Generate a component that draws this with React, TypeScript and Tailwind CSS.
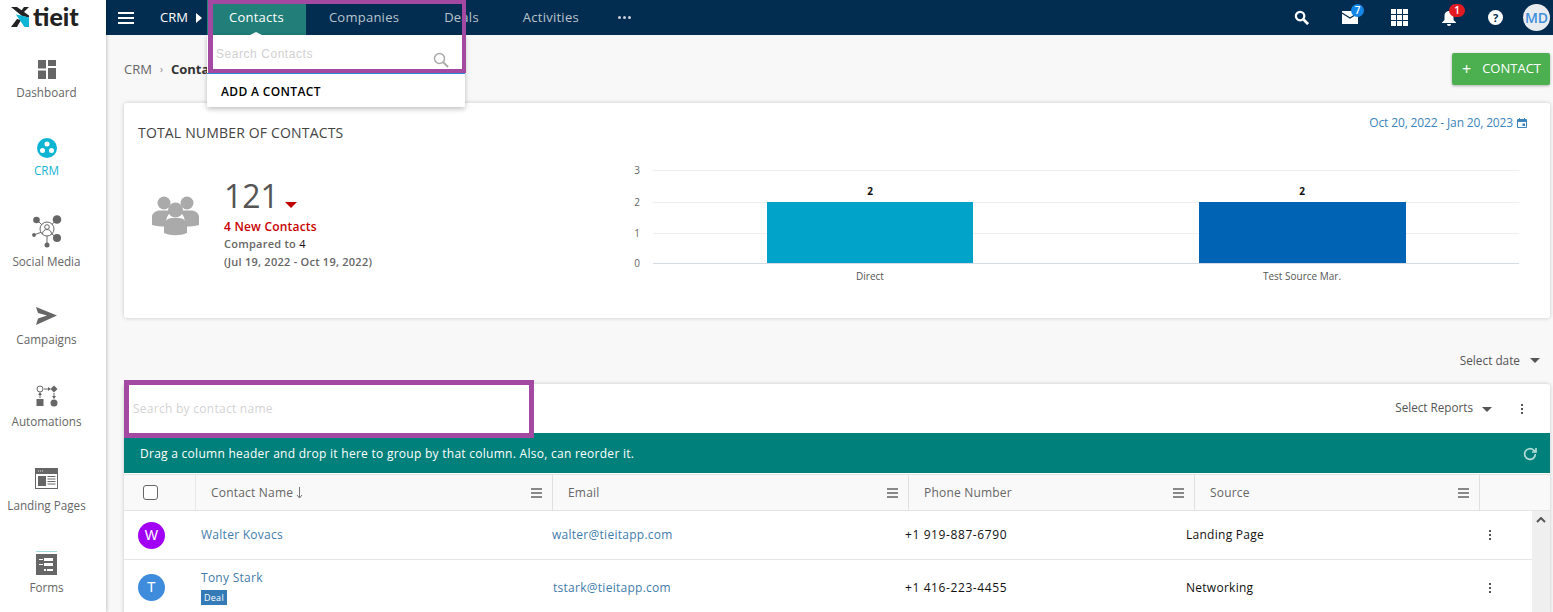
import type { ReactNode } from "react";

const Dashboard = () => (
  <svg width="18" height="19" viewBox="0 0 18 19" fill="#666" className="block">
    <rect x="0" y="0" width="8" height="8.500" />
    <rect x="0" y="10.500" width="8" height="8.500" />
    <rect x="10" y="0" width="8" height="6" />
    <rect x="10" y="8" width="8" height="11" />
  </svg>
);

const Crm = () => (
  <svg width="20" height="20" viewBox="0 0 20 20" className="block">
    <circle cx="10" cy="10" r="10" fill="#0db4d4" />
    <circle cx="10" cy="6" r="2.500" fill="#fff" />
    <circle cx="5.500" cy="12.500" r="2.500" fill="#fff" />
    <circle cx="14.500" cy="12.500" r="2.500" fill="#fff" />
  </svg>
);

const Social = () => (
  <svg width="30" height="33" viewBox="0 0 30 33" fill="#666" stroke="#666" className="block">
    <g strokeWidth="1">
      <line x1="15" y1="15" x2="5" y2="5" />
      <line x1="15" y1="15" x2="25" y2="4" />
      <line x1="15" y1="15" x2="25" y2="23" />
      <line x1="15" y1="15" x2="2" y2="20" />
      <line x1="15" y1="15" x2="15" y2="30" />
    </g>
    <circle cx="4.500" cy="5" r="3.300" stroke="none" />
    <circle cx="25" cy="4.500" r="4.300" stroke="none" />
    <circle cx="25" cy="23" r="4" stroke="none" />
    <circle cx="2" cy="20" r="1.900" stroke="none" />
    <circle cx="15" cy="30" r="2.500" stroke="none" />
    <circle cx="15" cy="14" r="7" fill="#fff" strokeWidth="1" />
    <circle cx="15" cy="12" r="2.300" fill="#fff" strokeWidth="1" />
    <path d="M10.500 19c0-6 9-6 9 0" fill="#fff" strokeWidth="1" />
  </svg>
);

const Campaigns = () => (
  <svg width="21" height="18" viewBox="0 0 21 18" fill="#666" className="block">
    <path d="M0 0l21 8.500L0 18l2-6.500 9-3-9-2.500z" />
  </svg>
);

const Automations = () => (
  <svg width="22" height="22" viewBox="0 0 22 22" fill="#666" stroke="#666" className="block">
    <circle cx="4" cy="4" r="3" fill="#fff" strokeWidth="1" />
    <path d="M8 4h6" strokeWidth="1" />
    <path d="M12 2l3 2-3 2z" stroke="none" />
    <path d="M18 0.500l3.500 3.500-3.500 3.500-3.500-3.500z" stroke="none" />
    <path d="M4 8v5M18 8v5" strokeWidth="1" />
    <path d="M2 10l2-3 2 3zM16 11l2 3 2-3z" stroke="none" />
    <rect x="0.500" y="14" width="7" height="7" stroke="none" />
    <circle cx="18" cy="18" r="3.500" stroke="none" />
  </svg>
);

const Landing = () => (
  <svg width="23" height="21" viewBox="0 0 23 21" className="block">
    <rect x="0.500" y="0.500" width="22" height="20" fill="#fff" stroke="#666" />
    <rect x="0" y="0" width="23" height="6" fill="#666" />
    <rect x="3" y="2.500" width="1" height="1" fill="#ddd" />
    <rect x="5" y="2.500" width="1" height="1" fill="#ddd" />
    <rect x="7" y="2.500" width="1" height="1" fill="#ddd" />
    <rect x="3" y="8" width="8" height="10" fill="#666" />
    <path d="M12.500 8.500h8M12.500 11h8M12.500 13.500h8M12.500 16h8" stroke="#666" strokeWidth="1" />
  </svg>
);

const Forms = () => (
  <svg width="21" height="24" viewBox="0 0 21 24" className="block">
    <rect x="0" y="0" width="21" height="1" fill="#9fdbe2" />
    <rect x="0" y="3" width="21" height="21" fill="#666" />
    <rect x="3" y="8" width="4" height="1" fill="#fff" />
    <rect x="8" y="7" width="9" height="3" fill="#fff" />
    <rect x="3" y="13" width="4" height="1" fill="#fff" />
    <rect x="8" y="12" width="9" height="3" fill="#fff" />
    <rect x="8" y="18" width="2" height="2" fill="#fff" />
    <rect x="11" y="18" width="6" height="2" fill="#fff" />
  </svg>
);

const navItems: { label: string; icon: ReactNode; box: string; gap: string; text: string }[] = [
  { label: "Dashboard", icon: <Dashboard />, box: "h-[66px]", gap: "mb-[4px]", text: "text-[#666]" },
  { label: "CRM", icon: <Crm />, box: "h-[78px]", gap: "mb-[3px]", text: "text-[#19b3d3]" },
  { label: "Social Media", icon: <Social />, box: "h-[91px]", gap: "mb-[4px]", text: "text-[#666]" },
  { label: "Campaigns", icon: <Campaigns />, box: "h-[78px]", gap: "mb-[5px]", text: "text-[#666]" },
  { label: "Automations", icon: <Automations />, box: "h-[82px]", gap: "mb-[5px]", text: "text-[#666]" },
  { label: "Landing Pages", icon: <Landing />, box: "h-[84px]", gap: "mb-[7px]", text: "text-[#666]" },
  { label: "Forms", icon: <Forms />, box: "h-[82px]", gap: "mb-[3px]", text: "text-[#666]" },
];

const Sidebar = () => (
  <aside className="w-[106px] shrink-0 bg-white shadow-[1px_0_3px_rgba(0,0,0,0.2)] z-10">
    <div className="h-[35px] flex items-center pl-[11px] gap-[4px] pb-[2px]">
      <svg width="18" height="20" viewBox="0 0 18 20" className="block">
        <path d="M0 0h6l12 8.500v2L11 9z" fill="#222" />
        <path d="M18 0L11 7 9 5.500 13 0z" fill="#222" />
        <path d="M0 20l6-8 4 1-4 7z" fill="#222" />
        <path d="M5 7.500l5 1 8 2V20h-4.500z" fill="#0db4d4" />
      </svg>
      <span className="font-['Lato',sans-serif] font-black text-[25px] leading-none text-[#222]">tieit</span>
    </div>
    {navItems.map((n) => (
      <div key={n.label} className={`${n.box} flex flex-col items-center justify-end pr-[13px]`}>
        <div className={n.gap}>{n.icon}</div>
        <span className={`text-[11.7px] leading-[18px] ${n.text}`}>{n.label}</span>
      </div>
    ))}
  </aside>
);

const TopBar = () => (
  <header className="h-[35px] bg-[#022d50] flex items-center text-white relative shrink-0">
    <div className="w-[42px] pl-[12px]">
      <div className="w-[16px] h-[12px] flex flex-col justify-between">
        <i className="block h-[2px] bg-white" />
        <i className="block h-[2px] bg-white" />
        <i className="block h-[2px] bg-white" />
      </div>
    </div>
    <span className="ml-[12px] text-[13px] font-medium">CRM</span>
    <span className="ml-[8px] w-0 h-0 border-y-[5px] border-y-transparent border-l-[6px] border-l-white" />
    <div className="ml-[5px] h-full w-[99px] bg-[#217e78] flex items-center justify-center text-[13px] tracking-[0.25px] relative">
      Contacts
      <span className="absolute bottom-0 left-1/2 -translate-x-1/2 w-0 h-0 border-x-[6px] border-x-transparent border-b-[3px] border-b-white" />
    </div>
    <div className="flex text-[13px] tracking-[0.25px] text-[#b9c4ce]">
      <span className="ml-[23px]">Companies</span>
      <span className="ml-[45px]">Deals</span>
      <span className="ml-[44px]">Activities</span>
    </div>
    <div className="ml-[39px] flex gap-[2px]">
      <i className="block w-[3px] h-[3px] rounded-full bg-[#c8d0d8]" />
      <i className="block w-[3px] h-[3px] rounded-full bg-[#c8d0d8]" />
      <i className="block w-[3px] h-[3px] rounded-full bg-[#c8d0d8]" />
    </div>
    <div className="ml-auto flex items-center h-full">
      <svg width="15" height="15" viewBox="0 0 16 16" className="mr-[33px]" fill="none" stroke="#fff">
        <circle cx="6.500" cy="6.500" r="4.500" strokeWidth="2.400" />
        <path d="M10 10l5 5" strokeWidth="3" />
      </svg>
      <div className="relative mr-[33px]">
        <svg width="16" height="13" viewBox="0 0 16 13" className="block">
          <path d="M0 0h16v13H0z" fill="#fff" />
          <path d="M0 2l8 5 8-5" fill="none" stroke="#022d50" strokeWidth="1.200" />
        </svg>
        <span className="absolute -top-[7px] left-[9px] w-[13px] h-[13px] rounded-full bg-[#1387e8] text-[10px] leading-[13px] text-center font-semibold">7</span>
      </div>
      <div className="grid grid-cols-3 gap-[1.500px] w-[17px] mr-[34px]">
        {Array.from({ length: 9 }, (_, i) => (
          <i key={i} className="block w-[4.600px] h-[4.600px] bg-white" />
        ))}
      </div>
      <div className="relative mr-[32px]">
        <svg width="14" height="16" viewBox="0 0 14 16" className="block" fill="#fff">
          <path d="M7 1c3 0 4.500 2.400 4.500 5v4L14 12.500V13H0v-.5L2.500 10V6C2.500 3.400 4 1 7 1z" />
          <path d="M5 14h4a2 2 0 0 1-4 0z" />
        </svg>
        <span className="absolute -top-[6px] left-[7px] w-[16px] h-[13px] rounded-full bg-[#e21b23] text-[10px] leading-[13px] text-center font-semibold">1</span>
      </div>
      <span className="w-[15px] h-[15px] rounded-full bg-white text-[#022d50] text-[11px] leading-[15px] font-bold text-center mr-[20px]">?</span>
      <span className="w-[27px] h-[27px] rounded-full bg-[#e9ecef] text-[#3c8fdc] text-[14px] leading-[27px] font-semibold text-center mr-[3px]">MD</span>
    </div>
  </header>
);

const Chart = () => (
  <svg width="926" height="130" viewBox="0 0 926 130" className="block font-['Open_Sans',sans-serif]">
    {[
      { y: 9, t: "3" },
      { y: 41, t: "2" },
      { y: 72, t: "1" },
      { y: 102, t: "0" },
    ].map((g) => (
      <g key={g.t}>
        <line x1="49" x2="915" y1={g.y + 0.5} y2={g.y + 0.5} stroke={g.t === "0" ? "#d5dbe5" : "#eceef2"} />
        <text x="33" y={g.y + 4} fontSize="10" fill="#666" textAnchor="middle">{g.t}</text>
      </g>
    ))}
    <rect x="163" y="41" width="206" height="61" fill="#01a3c9" />
    <rect x="595" y="41" width="207" height="61" fill="#0063b4" />
    <text x="266" y="34" fontSize="10" fontWeight="700" fill="#111" textAnchor="middle">2</text>
    <text x="698" y="34" fontSize="10" fontWeight="700" fill="#111" textAnchor="middle">2</text>
    <text x="266" y="119" fontSize="10" fill="#555" textAnchor="middle">Direct</text>
    <text x="698" y="119" fontSize="10" fill="#555" textAnchor="middle">Test Source Mar.</text>
  </svg>
);

const StatsCard = () => (
  <section className="mt-[18px] h-[215px] bg-white rounded-[3px] shadow-[0_0_4px_rgba(0,0,0,0.2)] relative flex flex-col">
    <div className="flex justify-between pl-[14px] pr-[23px]">
      <h2 className="mt-[20px] text-[14px] leading-[19px] tracking-[0.17px] text-[#444]">TOTAL NUMBER OF CONTACTS</h2>
      <div className="mt-[12px] flex items-center gap-[4px] h-[16px] text-[12px] tracking-[-0.15px] text-[#3c84bb]">
        Oct 20, 2022 - Jan 20, 2023
        <svg width="10" height="10" viewBox="0 0 10 10" fill="#3c84bb">
          <path d="M1 1h8a1 1 0 0 1 1 1v7a1 1 0 0 1-1 1H1a1 1 0 0 1-1-1V2a1 1 0 0 1 1-1zm0 3v5h8V4z" fillRule="evenodd" />
          <rect x="2" y="0" width="1" height="2" />
          <rect x="7" y="0" width="1" height="2" />
          <rect x="5.500" y="5.500" width="2.500" height="2.500" />
        </svg>
      </div>
    </div>
    <div className="flex">
      <div className="w-[100px] pl-[27px] pt-[54px]">
        <svg width="49" height="41" viewBox="0 0 49 41" fill="#aaa">
          <circle cx="13" cy="7" r="6.500" />
          <circle cx="36" cy="7" r="6.500" />
          <path d="M1 29V21c0-4 4-6.500 8-6.500h8c3 0 4 1 2 3-3 2-4 5-4 13-5 0-10 0-14-1.500zM48 29V21c0-4-4-6.500-8-6.500h-8c-3 0-4 1-2 3 3 2 4 5 4 13 5 0 10 0 14-1.500z" />
          <circle cx="24.500" cy="14" r="7.500" />
          <path d="M13 37V30c0-5 4-8 8-8h7c4 0 8 3 8 8v7c-7 3-16 3-23 0z" />
        </svg>
      </div>
      <div className="w-[381px] pt-[32px]">
        <div className="flex items-end h-[44px]">
          <span className="text-[32px] leading-[44px] font-medium text-[#555]">121</span>
          <span className="ml-[6px] mb-[10px] w-0 h-0 border-x-[6px] border-x-transparent border-t-[6px] border-t-[#c00000]" />
        </div>
        <p className="text-[12px] leading-[17px] tracking-[0.2px] font-semibold text-[#c80000]">4 New Contacts</p>
        <p className="text-[11px] leading-[18px] tracking-[0.25px] font-semibold text-[#666]">
          Compared to <span className="font-normal text-[#111]">4</span>
        </p>
        <p className="text-[11px] leading-[18px] tracking-[0.25px] font-semibold text-[#666]">(Jul 19, 2022 - Oct 19, 2022)</p>
      </div>
      <div className="pt-[19px] -ml-[1px]">
        <Chart />
      </div>
    </div>
  </section>
);

const columns = [
  { label: "Contact Name", w: "w-[357px]" },
  { label: "Email", w: "w-[356px]" },
  { label: "Phone Number", w: "w-[286px]" },
  { label: "Source", w: "w-[285px]" },
];

const Menu = () => (
  <div className="flex flex-col gap-[2px] w-[11px] ml-auto">
    <i className="block h-[2px] bg-[#888]" />
    <i className="block h-[2px] bg-[#888]" />
    <i className="block h-[2px] bg-[#888]" />
  </div>
);

const Dots = ({ color }: { color: string }) => (
  <div className="flex flex-col gap-[2px]">
    <i className={`block w-[2px] h-[2px] ${color}`} />
    <i className={`block w-[2px] h-[2px] ${color}`} />
    <i className={`block w-[2px] h-[2px] ${color}`} />
  </div>
);

const rows = [
  { initial: "W", avatar: "bg-[#a100f5]", name: "Walter Kovacs", email: "walter@tieitapp.com", emailPad: "pl-0", phone: "+1 919-887-6790", source: "Landing Page", deal: false, h: "h-[49px]" },
  { initial: "T", avatar: "bg-[#3f8cdc]", name: "Tony Stark", email: "tstark@tieitapp.com", emailPad: "pl-[1px]", phone: "+1 416-223-4455", source: "Networking", deal: true, h: "h-[56px]" },
];

const ContactsTable = () => (
  <section className="bg-white rounded-t-[3px] shadow-[0_0_4px_rgba(0,0,0,0.2)]">
    <div className="h-[49px] flex items-center pl-[9px]">
      <span className="text-[12px] tracking-[0.27px] text-[#d3d3d3]">Search by contact name</span>
      <span className="ml-auto -mt-[1px] text-[11.700px] text-[#555]">Select Reports</span>
      <span className="ml-[9px] w-0 h-0 border-x-[5px] border-x-transparent border-t-[5px] border-t-[#555] mt-[2px]" />
      <div className="ml-[29px] mr-[27px]">
        <Dots color="bg-[#555]" />
      </div>
    </div>
    <div className="h-[40px] bg-[#00807b] flex items-center pl-[16px] pr-[12px] pt-[1px] text-[12px] tracking-[0.27px] text-white">
      Drag a column header and drop it here to group by that column. Also, can reorder it.
      <svg width="16" height="16" viewBox="0 0 24 24" fill="none" stroke="#b4dcd9" strokeWidth="2.500" className="ml-auto">
        <path d="M20 12a8 8 0 1 1-2.500-5.800L21 9" />
        <path d="M21 3v6h-6" />
      </svg>
    </div>
    <div className="h-[37px] flex bg-[#f9f9f9] border-y border-[#e4e4e4] mt-[1px] text-[12px] tracking-[0.2px] text-[#666]">
      <div className="w-[72px] border-r border-[#e8e8e8] flex items-center pl-[19px]">
        <span className="w-[15px] h-[15px] border border-[#666] rounded-[3px] bg-white" />
      </div>
      {columns.map((c) => (
        <div key={c.label} className={`${c.w} border-r border-[#e0e0e0] flex items-center pl-[15px] pr-[10px] pt-[1px]`}>
          {c.label}
          {c.label === "Contact Name" && (
            <svg width="7" height="12" viewBox="0 0 7 12" fill="none" stroke="#777" className="ml-[3px]">
              <path d="M3.500 0v11M1 8l2.500 3L6 8" />
            </svg>
          )}
          <Menu />
        </div>
      ))}
    </div>
    <div className="relative">
      {rows.map((r) => (
        <div key={r.name} className={`${r.h} flex items-center border-b border-[#e6e6e6] mr-[18px] text-[12px] tracking-[0.27px]`}>
          <div className="w-[77px] pl-[14px]">
            <span className={`block w-[27px] h-[27px] rounded-full ${r.avatar} text-white text-[14px] leading-[27px] text-center font-['Liberation_Sans',sans-serif]`}>{r.initial}</span>
          </div>
          <div className="w-[351px] text-[#3f7cac]">
            <div className={r.deal ? "-mt-[1px]" : ""}>{r.name}</div>
            {r.deal && <span className="inline-block mt-[3px] px-[3px] h-[15px] leading-[15px] text-[9px] bg-[#337ab7] text-white">Deal</span>}
          </div>
          <div className={`w-[353px] text-[#3f7cac] ${r.emailPad}`}>{r.email}</div>
          <div className="w-[281px] tracking-[0.6px] text-[#111]">{r.phone}</div>
          <div className="w-[303px] text-[#111]">{r.source}</div>
          <Dots color="bg-[#555]" />
        </div>
      ))}
      <div className="absolute right-0 top-0 bottom-0 w-[18px] bg-[#efefef] flex justify-center pt-[6px]">
        <svg width="10" height="6" viewBox="0 0 10 6" fill="none" stroke="#555" strokeWidth="2">
          <path d="M1 5l4-4 4 4" />
        </svg>
      </div>
    </div>
  </section>
);

export default function App() {
  return (
    <div className="w-[1553px] h-[612px] overflow-hidden flex bg-[#f8f8f8] relative font-['Open_Sans','Noto_Sans',sans-serif]">
      <Sidebar />
      <div className="flex-1 flex flex-col min-w-0">
        <TopBar />
        <main className="pl-[18px] pr-[3px]">
          <div className="h-[50px] flex items-start justify-between">
            <div className="mt-[25px] text-[13px] leading-[18px] text-[#666] flex items-center">
              CRM
              <span className="mx-[8px] text-[10px] text-[#888]">›</span>
              <span className="font-bold text-[#333]">Contacts</span>
            </div>
            <button className="mt-[18px] w-[98px] h-[32px] bg-[#4caf50] rounded-[2px] shadow-[0_1px_3px_rgba(0,0,0,0.3)] text-white text-[13px] flex items-center pl-[10px]">
              <span className="text-[16px] leading-none">+</span>
              <span className="ml-[11px]">CONTACT</span>
            </button>
          </div>
          <StatsCard />
          <div className="h-[66px] flex items-end justify-end pr-[10px] pb-[16px] text-[11.800px] text-[#555]">
            <span className="leading-[16px]">Select date</span>
            <span className="ml-[10px] mb-[5px] w-0 h-0 border-x-[5px] border-x-transparent border-t-[5px] border-t-[#555]" />
          </div>
          <ContactsTable />
        </main>
      </div>

      {/* contacts menu, open over the page */}
      <div className="absolute left-[207px] top-[35px] w-[258px] h-[72px] bg-white shadow-[0_2px_5px_rgba(0,0,0,0.25)] z-20">
        <div className="h-[38px] border-b border-[#2b8ad6] flex items-center pl-[9px] pr-[16px] box-content">
          <span className="text-[12px] text-[#d0d0d0] font-['Liberation_Sans',sans-serif] tracking-[0.55px] -mt-[1px]">Search Contacts</span>
          <svg width="16" height="16" viewBox="0 0 16 16" fill="none" stroke="#aaa" className="ml-auto mt-[12px]">
            <circle cx="6.500" cy="6.500" r="5" strokeWidth="1.500" />
            <path d="M10 10l5 5" strokeWidth="2" />
          </svg>
        </div>
        <div className="text-[12px] leading-[36px] tracking-[0.35px] font-semibold text-black pl-[14px]">ADD A CONTACT</div>
      </div>

      {/* annotation boxes drawn on top of the screenshot */}
      <div className="absolute left-[208px] top-0 w-[258px] h-[73px] border-[4px] border-l-[5px] border-[#a449a1] z-30 pointer-events-none" />
      <div className="absolute left-[124px] top-[380px] w-[410px] h-[58px] border-[5px] border-[#a449a1] z-30 pointer-events-none" />
    </div>
  );
}
